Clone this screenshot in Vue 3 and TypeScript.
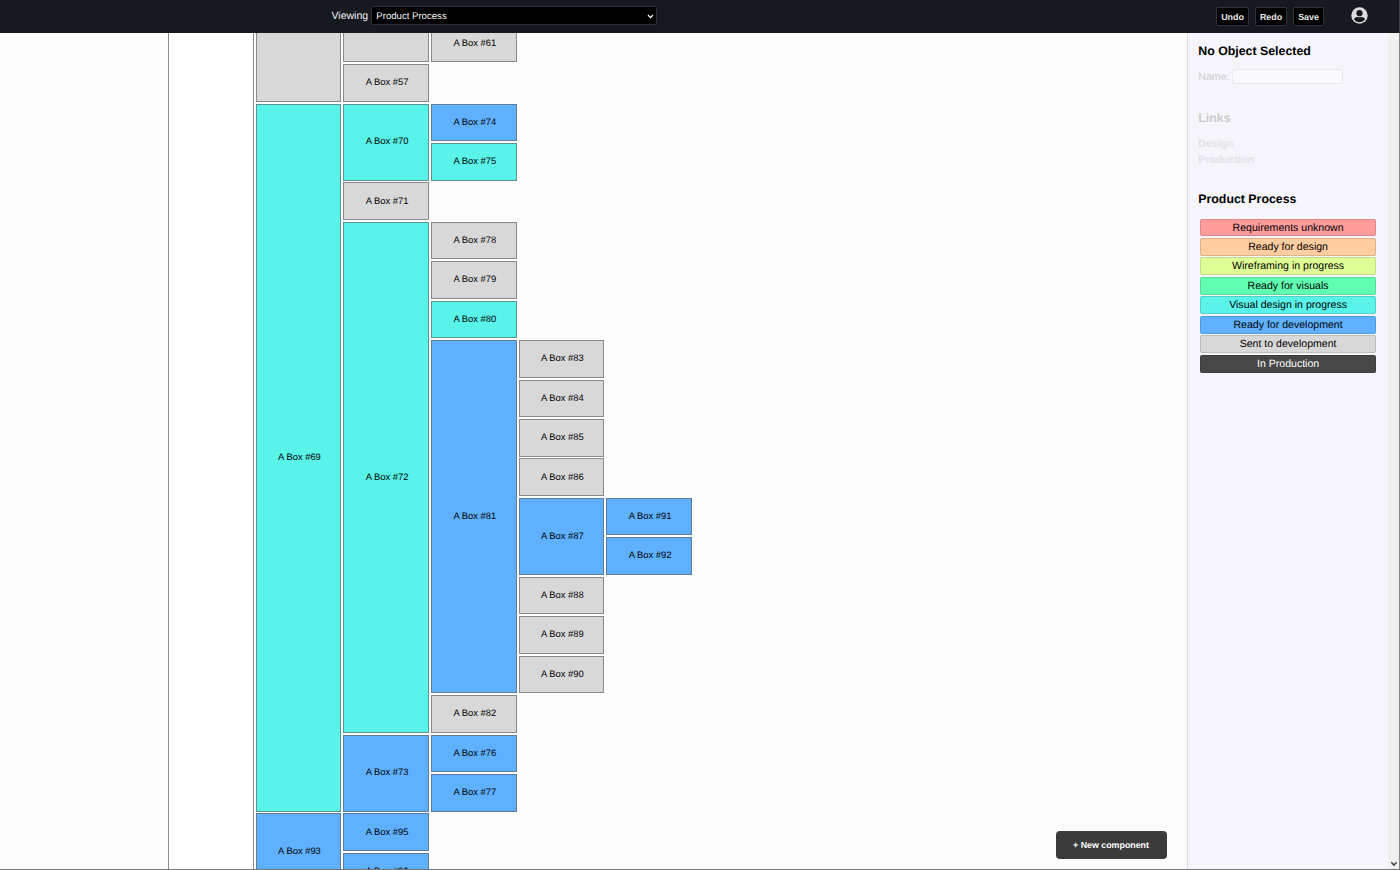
<script setup lang="ts">
type Tone = 'gray' | 'teal' | 'blue'

interface Box {
  id: number | null
  col: number
  row: number
  span: number
  tone: Tone
}

const box = (id: number | null, col: number, row: number, span: number, tone: Tone): Box => ({ id, col, row, span, tone })

const boxes: Box[] = [
  box(null, 1, 1, 2, 'gray'),
  box(null, 2, 1, 1, 'gray'),
  box(61, 3, 1, 1, 'gray'),
  box(57, 2, 2, 1, 'gray'),
  box(69, 1, 3, 18, 'teal'),
  box(70, 2, 3, 2, 'teal'),
  box(74, 3, 3, 1, 'blue'),
  box(75, 3, 4, 1, 'teal'),
  box(71, 2, 5, 1, 'gray'),
  box(72, 2, 6, 13, 'teal'),
  box(78, 3, 6, 1, 'gray'),
  box(79, 3, 7, 1, 'gray'),
  box(80, 3, 8, 1, 'teal'),
  box(81, 3, 9, 9, 'blue'),
  box(83, 4, 9, 1, 'gray'),
  box(84, 4, 10, 1, 'gray'),
  box(85, 4, 11, 1, 'gray'),
  box(86, 4, 12, 1, 'gray'),
  box(87, 4, 13, 2, 'blue'),
  box(91, 5, 13, 1, 'blue'),
  box(92, 5, 14, 1, 'blue'),
  box(88, 4, 15, 1, 'gray'),
  box(89, 4, 16, 1, 'gray'),
  box(90, 4, 17, 1, 'gray'),
  box(82, 3, 18, 1, 'gray'),
  box(73, 2, 19, 2, 'blue'),
  box(76, 3, 19, 1, 'blue'),
  box(77, 3, 20, 1, 'blue'),
  box(93, 1, 21, 2, 'blue'),
  box(95, 2, 21, 1, 'blue'),
  box(96, 2, 22, 1, 'blue'),
]

const place = (b: Box) => ({ gridColumn: `${b.col}`, gridRow: `${b.row} / span ${b.span}` })

const stages = [
  { label: 'Requirements unknown', tone: 'red' },
  { label: 'Ready for design', tone: 'orange' },
  { label: 'Wireframing in progress', tone: 'lime' },
  { label: 'Ready for visuals', tone: 'green' },
  { label: 'Visual design in progress', tone: 'teal' },
  { label: 'Ready for development', tone: 'blue' },
  { label: 'Sent to development', tone: 'gray' },
  { label: 'In Production', tone: 'dark' },
]
</script>

<template>
  <div class="app">
    <header class="bar">
      <span class="viewing">Viewing</span>
      <div class="select">
        <span>Product Process</span>
        <svg width="7" height="5" viewBox="0 0 7 5"><path d="M1 1 L3.5 3.6 L6 1" fill="none" stroke="#fff" stroke-width="1.2" /></svg>
      </div>
      <div class="actions">
        <button class="undo">Undo</button>
        <button class="redo">Redo</button>
        <button class="save">Save</button>
        <svg class="user" width="17" height="17" viewBox="0 0 17 17">
          <circle cx="8.500" cy="8.500" r="8.200" fill="#dcdcde" />
          <circle cx="8.500" cy="6.200" r="3.100" fill="#161920" />
          <path fill="#161920" d="M2.900 12.300C3.700 10.700 5 9.900 6.400 9.900C7.800 10.500 9.200 10.500 10.600 9.900C12 9.900 13.300 10.700 14.100 12.300C12.800 14.100 10.800 15.200 8.500 15.200S4.200 14.100 2.900 12.300Z" />
        </svg>
      </div>
    </header>

    <div class="body">
      <main class="canvas">
        <div class="root-box"></div>
        <div class="tree">
          <div v-for="(b, i) in boxes" :key="i" class="box" :class="b.tone" :style="place(b)">
            <span v-if="b.id">A Box #{{ b.id }}</span>
          </div>
        </div>
        <button class="new">+ New component</button>
      </main>

      <aside class="panel">
        <h2>No Object Selected</h2>
        <label class="name"><span>Name:</span><input disabled /></label>
        <h2 class="faded">Links</h2>
        <div class="links">
          <span>Design</span>
          <span>Production</span>
        </div>
        <h2 class="process">Product Process</h2>
        <ul>
          <li v-for="s in stages" :key="s.label" :class="s.tone">{{ s.label }}</li>
        </ul>
      </aside>
      <div class="scroll">
        <svg width="8" height="6" viewBox="0 0 8 6"><path d="M1.300 1.300 L4 4.100 L6.700 1.300" fill="none" stroke="#444" stroke-width="1.500" /></svg>
      </div>
    </div>
  </div>
</template>

<style>
body {
  overflow: hidden;
}
</style>

<style scoped>
.app {
  width: 1400px;
  height: 870px;
  box-sizing: border-box;
  border-bottom: 1px solid #77777a;
  display: flex;
  flex-direction: column;
  overflow: hidden;
  font-family: "Liberation Sans", Arial, sans-serif;
  text-rendering: geometricPrecision;
  color: #000;
}
.bar {
  height: 33px;
  flex: none;
  box-sizing: border-box;
  background: #161920;
  border-right: 1px solid #3d4046;
  display: flex;
  align-items: flex-start;
  padding-left: 331.5px;
}
.viewing {
  width: 39.800px;
  font-size: 10.500px;
  line-height: 12px;
  margin-top: 9.500px;
  color: #f0f0f0;
}
.select {
  box-sizing: border-box;
  width: 286px;
  height: 19px;
  margin-top: 6px;
  border: 1px solid #2c2e33;
  border-radius: 2px;
  background: #000;
  color: #f2f2f2;
  font-size: 9.600px;
  display: flex;
  align-items: center;
  justify-content: space-between;
  padding: 1px 2px 0 4px;
}
.actions {
  margin-left: auto;
  display: flex;
  padding: 7px 31px 0 0;
}
.actions button {
  box-sizing: border-box;
  height: 19px;
  padding: 0;
  background: #000;
  border: 1px solid #303135;
  border-radius: 2px;
  color: #e6e6e6;
  font: bold 8.900px "Liberation Sans", Arial, sans-serif;
  text-rendering: geometricPrecision;
}
.undo { width: 33px; margin-right: 6px; }
.redo { width: 32px; margin-right: 6px; }
.save { width: 31px; margin-right: 27px; }
.body {
  flex: 1;
  min-height: 0;
  display: flex;
}
.canvas {
  flex: 1;
  position: relative;
  display: flex;
  align-items: flex-start;
  background: #fcfcfc;
  overflow: hidden;
}
.root-box {
  box-sizing: border-box;
  align-self: stretch;
  margin-left: 168px;
  width: 86px;
  flex: none;
  background: #fff;
  border: solid #8a8a8a;
  border-width: 0 1px;
}
.tree {
  display: grid;
  flex: none;
  grid-template-columns: repeat(5, 87.650px);
  grid-template-rows: repeat(22, 39.440px);
  margin: -8.350px 0 0 1.600px;
}
.box {
  box-sizing: border-box;
  margin: 0 1.900px 1.900px 0;
  border: 1px solid rgba(95, 95, 95, 0.650);
  display: flex;
  align-items: center;
  justify-content: center;
  font-size: 9.400px;
  line-height: 11px;
  padding: 0 0 2.300px 2px;
  box-shadow: 0 0 0 1px #fff;
}
.teal { background: #59f3e9; }
.blue { background: #5fb1ff; }
.gray { background: #d8d8d8; }
.red { background: #ff9c9c; }
.orange { background: #ffcda0; }
.lime { background: #dfff96; }
.green { background: #61ffb1; }
.new {
  position: absolute;
  right: 20.500px;
  bottom: 10px;
  width: 111px;
  height: 28px;
  padding: 0;
  border: 0;
  border-radius: 4px;
  background: #3b3b3b;
  color: #fff;
  font: bold 8.850px "Liberation Sans", Arial, sans-serif;
  text-rendering: geometricPrecision;
}
.panel {
  box-sizing: border-box;
  width: 201px;
  flex: none;
  background: #f5f5fb;
  border-left: 1px solid #dcdcdc;
  padding: 10.500px 12px 0 10.300px;
}
h2 {
  margin: 0;
  font-size: 12.350px;
  line-height: 15px;
}
.name {
  display: flex;
  align-items: center;
  height: 15px;
  margin-top: 10.500px;
  font-size: 10.600px;
  color: #ccccd0;
}
.name span {
  width: 33.700px;
}
.name input {
  box-sizing: border-box;
  width: 111px;
  height: 15px;
  padding: 0;
  border: 1px solid #e9e9ec;
  border-radius: 2px;
  background: #fafafd;
}
.faded {
  margin-top: 26.500px;
  color: #cbcbcf;
}
.links {
  display: flex;
  flex-direction: column;
  margin-top: 10px;
  font-size: 10.550px;
  font-weight: bold;
  line-height: 16.500px;
  color: #e3e3e8;
}
.process {
  margin-top: 23.500px;
}
ul {
  list-style: none;
  margin: 11.500px 0 0 2.200px;
  padding: 0;
  display: flex;
  flex-direction: column;
  gap: 1.500px;
}
li {
  box-sizing: border-box;
  width: 175.200px;
  height: 17.950px;
  border: 1px solid rgba(0, 0, 0, 0.130);
  border-radius: 2px;
  text-align: center;
  font-size: 10.570px;
  line-height: 16.200px;
}
.dark {
  background: #474747;
  color: #fff;
}
.scroll {
  box-sizing: border-box;
  width: 12px;
  flex: none;
  background: #f0f0f0;
  border-right: 1px solid #85858a;
  display: flex;
  align-items: flex-end;
  justify-content: center;
  padding-bottom: 2px;
}
</style>
